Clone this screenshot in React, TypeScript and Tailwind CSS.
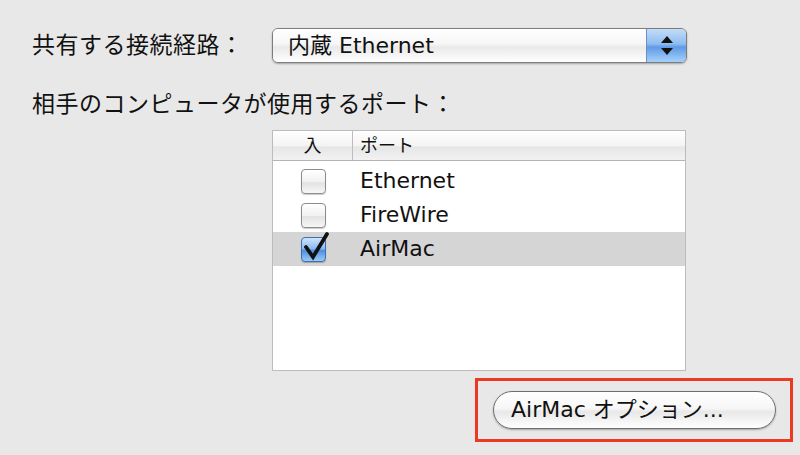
import React from "react";

const font = { fontFamily: '"DejaVu Sans", "Noto Sans CJK JP", sans-serif' };

function Checkbox({ checked }: { checked?: boolean }) {
  return (
    <div className="relative w-[25px] h-[25px]">
      <div
        className={
          checked
            ? "w-full h-full rounded-[4px] border border-[#3f6fae] bg-[linear-gradient(to_bottom,#cfe4fb_0%,#8dbcf2_45%,#4f8fe0_55%,#9bcaf9_100%)] shadow-[0_1px_1px_rgba(0,0,0,0.25)]"
            : "w-full h-full rounded-[4px] border border-[#8c8c8c] bg-[linear-gradient(to_bottom,#ffffff_0%,#f1f1f1_50%,#e2e2e2_55%,#f7f7f7_100%)] shadow-[0_1px_1px_rgba(0,0,0,0.2)]"
        }
      />
      {checked && (
        <svg className="absolute left-[0px] top-[-5px]" width="30" height="30" viewBox="0 0 30 30">
          <path d="M5 15 L12 25 L26 2" fill="none" stroke="#111" strokeWidth="3.8" strokeLinejoin="miter" strokeLinecap="round" />
        </svg>
      )}
    </div>
  );
}

function Row({ label, checked, selected }: { label: string; checked?: boolean; selected?: boolean }) {
  return (
    <div className={`flex items-center h-[34px] ${selected ? "bg-[#d5d5d5]" : ""}`}>
      <div className="w-[80px] flex justify-center">
        <Checkbox checked={checked} />
      </div>
      <div className="pl-[7px] text-[22px] text-[#111] leading-none">{label}</div>
    </div>
  );
}

export default function App() {
  return (
    <div className="w-[800px] h-[455px] bg-[#e8e8e8] overflow-hidden text-[#111]" style={font}>
      <div className="flex items-center pt-[28px] pl-[32px]">
        <div className="w-[240px] text-[23px] tracking-[0.5px] leading-none">共有する接続経路：</div>
        <div className="flex w-[415px] h-[35px] rounded-[6px] border border-[#7d7d7d] overflow-hidden shadow-[0_1px_2px_rgba(0,0,0,0.3)]">
          <div className="flex-1 flex items-center pl-[15px] text-[22px] leading-none bg-[linear-gradient(to_bottom,#ffffff_0%,#f6f6f6_45%,#e9e9e9_55%,#ffffff_100%)]">
            内蔵 Ethernet
          </div>
          <div className="w-[40px] flex flex-col items-center justify-center gap-[5px] border-l border-[#6b8fbf] bg-[linear-gradient(to_bottom,#c4dcf8_0%,#8fbdf0_45%,#5e9be5_55%,#a6d0fb_100%)]">
            <svg width="12" height="7" viewBox="0 0 12 7"><path d="M6 0 L12 7 L0 7 Z" fill="#111" /></svg>
            <svg width="12" height="7" viewBox="0 0 12 7"><path d="M0 0 L12 0 L6 7 Z" fill="#111" /></svg>
          </div>
        </div>
      </div>

      <div className="pl-[32px] mt-[30px] text-[23px] tracking-[0.5px] leading-none">相手のコンピュータが使用するポート：</div>

      <div className="ml-[272px] mt-[14px] w-[414px] h-[241px] border border-[#bcbcbc] bg-white flex flex-col">
        <div className="flex h-[30px] border-b border-[#b5b5b5] bg-[linear-gradient(to_bottom,#ffffff_0%,#f4f4f4_50%,#e6e6e6_55%,#f2f2f2_100%)] text-[18px] leading-none">
          <div className="w-[80px] flex items-center justify-center border-r border-[#bdbdbd]">入</div>
          <div className="flex items-center pl-[7px]">ポート</div>
        </div>
        <div className="pt-[3px]">
          <Row label="Ethernet" />
          <Row label="FireWire" />
          <Row label="AirMac" checked selected />
        </div>
      </div>

      <div className="flex justify-end pr-[7px] mt-[7px]">
        <div className="w-[318px] h-[64px] border-[3px] border-[#ec3a22] flex items-center pl-[15px]">
          <div className="w-[283px] h-[38px] rounded-full border border-[#6e6e6e] flex items-center pl-[17px] text-[22px] leading-none bg-[linear-gradient(to_bottom,#ffffff_0%,#f7f7f7_45%,#e8e8e8_55%,#ffffff_100%)] shadow-[0_1px_2px_rgba(0,0,0,0.3)]">
            AirMac オプション...
          </div>
        </div>
      </div>
    </div>
  );
}
